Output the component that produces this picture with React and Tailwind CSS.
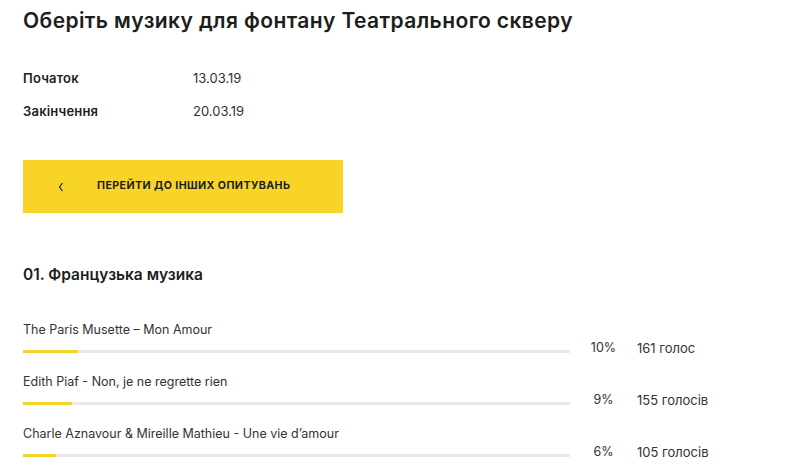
export default function App() {
  const rows = [
    { t: "The Paris Musette – Mon Amour", p: 10, v: "161 голос" },
    { t: "Edith Piaf - Non, je ne regrette rien", p: 9, v: "155 голосів" },
    { t: "Charle Aznavour & Mireille Mathieu - Une vie d’amour", p: 6, v: "105 голосів" },
  ];
  return (
    <div className="w-[790px] h-[476px] overflow-hidden bg-white text-[#1d1d1d]" style={{ fontFamily: "Inter, 'Noto Sans', sans-serif" }}>
      <div className="pl-[23px] pt-[6px]">
        <h1 className="text-[21px] leading-[30px] font-semibold tracking-[0.4px]">Оберіть музику для фонтану Театрального скверу</h1>
        <div className="mt-[33px] flex flex-col gap-[15px] text-[13px] leading-[18px]">
          <div className="flex"><span className="w-[170px] font-semibold tracking-[0.2px]">Початок</span><span className="text-[#333]">13.03.19</span></div>
          <div className="flex"><span className="w-[170px] font-semibold tracking-[0.2px]">Закінчення</span><span className="text-[#333]">20.03.19</span></div>
        </div>
        <button className="mt-[40px] w-[320px] h-[53px] bg-[#f8d428] flex items-center pl-[35px] text-[10.7px] font-bold tracking-[0.4px] text-[#1d1d1d]">
          <svg width="6" height="10" viewBox="0 0 6 10" className="mr-[33px]"><path d="M4.5 1 L1.5 5 L4.5 9" fill="none" stroke="#1d1d1d" strokeWidth="1.2" /></svg>
          ПЕРЕЙТИ ДО ІНШИХ ОПИТУВАНЬ
        </button>
        <h2 className="mt-[51px] text-[15.5px] leading-[22px] font-semibold">01. Французька музика</h2>
        <div className="mt-[35px] flex flex-col gap-[20px]">
          {rows.map((r) => (
            <div key={r.t} className="flex items-end">
              <div className="w-[547px]">
                <div className="text-[12.5px] leading-[18px] text-[#333]">{r.t}</div>
                <div className="mt-[11px] h-[3px] bg-[#e8e8e8] relative">
                  <div className="h-[3px] bg-[#f3d42e]" style={{ width: `${r.p}%` }} />
                </div>
              </div>
              <div className="w-[67px] text-center text-[12.5px] leading-[18px] text-[#333] mb-[-4px]">{r.p}%</div>
              <div className="text-[13px] leading-[18px] text-[#333] mb-[-4px]">{r.v}</div>
            </div>
          ))}
        </div>
      </div>
    </div>
  );
}
